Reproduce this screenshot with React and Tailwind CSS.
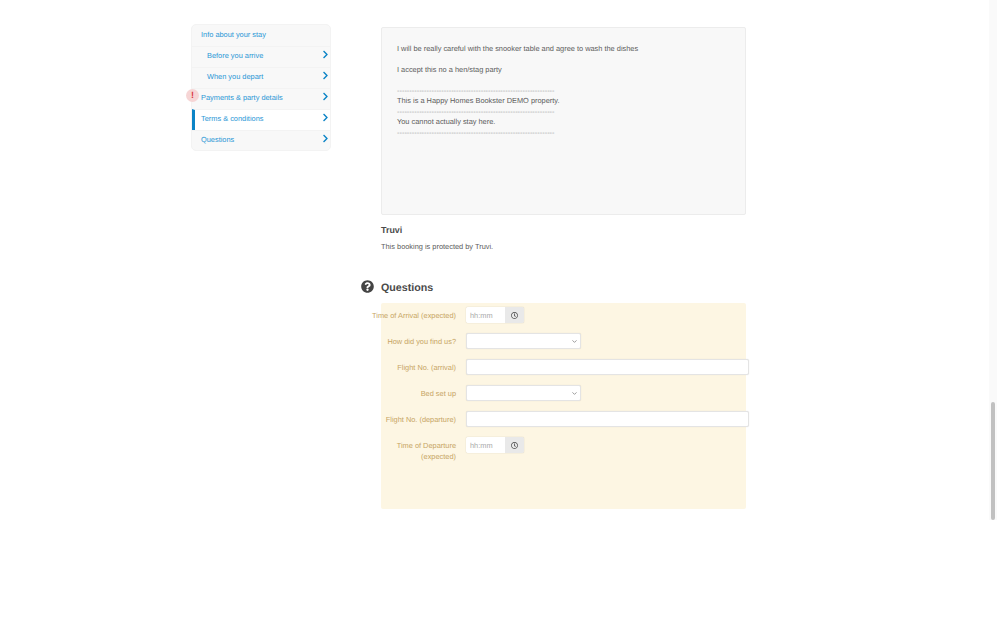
import { FaChevronRight, FaQuestionCircle, FaRegClock } from 'react-icons/fa';
import { ChevronDown } from 'lucide-react';

const font = "font-['Liberation_Sans',Arial,sans-serif] antialiased [text-rendering:geometricPrecision]";
const dashes = '-'.repeat(64);

const navItems = [
  { label: 'Info about your stay', plain: true },
  { label: 'Before you arrive', sub: true },
  { label: 'When you depart', sub: true },
  { label: 'Payments & party details', alert: true },
  { label: 'Terms & conditions', active: true },
  { label: 'Questions' },
];

function NavItem({ item }) {
  return (
    <div
      className={`relative flex h-[21px] items-center justify-between border-t pb-[2px] pr-0 ${
        item.plain ? 'border-transparent' : 'border-[#f3f3f3]'
      } ${item.active ? 'bg-white border-l-[3px] !border-l-[#0b84c6] pl-[6px]' : item.sub ? 'pl-[15px]' : 'pl-[9px]'}`}
    >
      {item.alert && (
        <span className="absolute left-[-6px] top-[0px] grid h-[13px] w-[13px] place-items-center rounded-full bg-[#f6d5d5] text-[9px] font-bold leading-none text-[#d9363e]">
          !
        </span>
      )}
      <span className="text-[7.4px] text-[#2a97d6]">{item.label}</span>
      {!item.plain && <FaChevronRight className="mb-[3px] h-[9px] w-[9px] text-[#0b84c6]" />}
    </div>
  );
}

function Field({ label, children }) {
  return (
    <div className="flex h-[26px] items-start">
      <label className="ml-[-13px] mt-[8px] w-[88px] shrink-0 text-right text-[7.4px] leading-[10.4px] text-[#c7a564]">{label}</label>
      <div className="ml-[10px] mt-[4px]">{children}</div>
    </div>
  );
}

function TimeInput() {
  return (
    <div className="flex h-4 w-[58px] rounded-[2px] shadow-[0_0_1px_rgba(0,0,0,0.3)]">
      <div className="flex w-[39px] items-center rounded-l-[2px] bg-white pl-1 text-[7.4px] text-[#a8a8a8]">hh:mm</div>
      <div className="grid w-[19px] place-items-center rounded-r-[2px] bg-[#e9e9e9]">
        <FaRegClock className="h-[7px] w-[7px] text-[#444]" />
      </div>
    </div>
  );
}

function SelectBox() {
  return (
    <div className="flex h-4 w-[115px] items-center justify-end rounded-[2px] border border-[#e4e4e4] bg-white pr-[2px] shadow-[0_0_1px_rgba(0,0,0,0.15)]">
      <ChevronDown className="h-[7px] w-[7px] text-[#777]" strokeWidth={2.5} />
    </div>
  );
}

function TextBox() {
  return <div className="h-4 w-[283px] rounded-[2px] border border-[#e4e4e4] bg-white shadow-[0_0_1px_rgba(0,0,0,0.15)]" />;
}

export default function App() {
  return (
    <div className={`${font} h-[624px] overflow-hidden bg-white text-[#4a4a4a]`}>
      <div className="flex h-[520px]">
        <div className="flex flex-1">
          {/* sidebar */}
          <div className="ml-[191px] mt-6 h-[127px] w-[140px] shrink-0 rounded-[5px] border border-[#f3f3f3] bg-[#f8f8f8]">
            {navItems.map((item) => (
              <NavItem key={item.label} item={item} />
            ))}
          </div>

          {/* main column */}
          <div className="ml-[50px] w-[365px] shrink-0 pt-[27px]">
            <div className="h-[188px] rounded-[2px] border border-[#ececec] bg-[#f8f8f8] pl-[15px] pt-[16px] text-[7.4px] leading-[10.4px] text-[#5c5c5c]">
              <p>I will be really careful with the snooker table and agree to wash the dishes</p>
              <p className="mt-[10.6px]">I accept this no a hen/stag party</p>
              <p className="mt-[10.6px] text-[#999]">{dashes}</p>
              <p>This is a Happy Homes Bookster DEMO property.</p>
              <p className="text-[#999]">{dashes}</p>
              <p>You cannot actually stay here.</p>
              <p className="text-[#999]">{dashes}</p>
            </div>

            <h3 className="mt-[9px] text-[8.9px] font-bold leading-[13px] text-[#4a4a4a]">Truvi</h3>
            <p className="mt-[5px] text-[7.4px] leading-[10.4px] text-[#5c5c5c]">This booking is protected by Truvi.</p>

            <div className="relative mt-[28px] h-[16px]">
              <FaQuestionCircle className="absolute left-[-20px] top-0 h-[13px] w-[13px] text-[#444]" />
              <h2 className="text-[10.7px] font-bold leading-[16px] text-[#4a4a4a]">Questions</h2>
            </div>

            <div className="mt-[7px] h-[206px] rounded-[2px] bg-[#fdf6e3]">
              <Field label="Time of Arrival (expected)"><TimeInput /></Field>
              <Field label="How did you find us?"><SelectBox /></Field>
              <Field label="Flight No. (arrival)"><TextBox /></Field>
              <Field label="Bed set up"><SelectBox /></Field>
              <Field label="Flight No. (departure)"><TextBox /></Field>
              <Field label="Time of Departure (expected)"><TimeInput /></Field>
            </div>
          </div>
        </div>

        {/* page scrollbar */}
        <div className="mr-[3px] flex w-2 flex-col justify-end bg-[#fafafa] px-[2px]">
          <div className="h-[118px] rounded-full bg-[#c1c1c1]" />
        </div>
      </div>
    </div>
  );
}
